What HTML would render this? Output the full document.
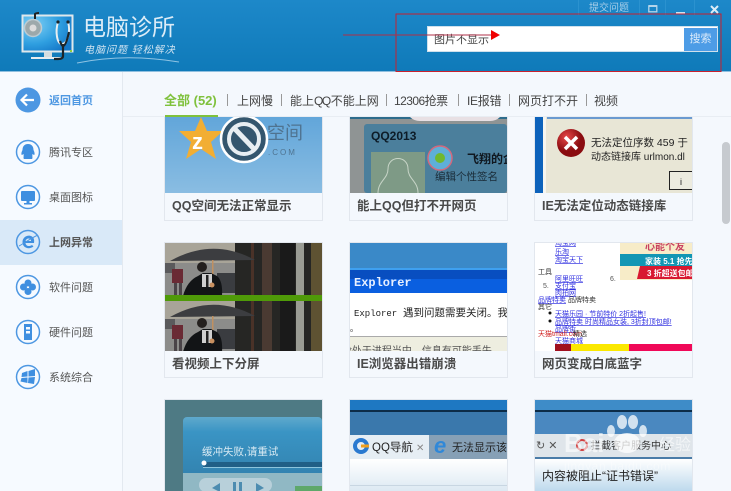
<!DOCTYPE html>
<html lang="zh"><head><meta charset="utf-8"><style>
html,body{margin:0;padding:0}
body{width:731px;height:491px;overflow:hidden;position:relative;background:#f4f8fd;font-family:"Liberation Sans","Noto Sans CJK SC",sans-serif;color:#444}
#all{position:absolute;left:0;top:0;width:731px;height:491px;overflow:hidden;filter:blur(.3px)}
.a{position:absolute;white-space:nowrap}
#hd{left:0;top:0;width:731px;height:71px;background:linear-gradient(#1d88c9,#0f7ab9);border-bottom:1px solid #8fbfdf;box-sizing:content-box}
#sb{left:0;top:72px;width:122px;height:419px;background:#f6faff;border-right:1px solid #e3e9f0}
.nav{left:49px;font-size:11px;line-height:16px;color:#555}
.tab{top:93px;font-size:12px;line-height:16px;color:#444}
.sep{top:94px;width:1px;height:12px;background:#999}
.card{position:absolute;width:157px;background:#f4f8fd;border:1px solid #e2e7ee;border-top:0;height:103px;overflow:hidden}
.card svg{position:absolute;left:0;top:0;display:block;filter:blur(.3px)}
.card b{position:absolute;left:7px;font-size:12.5px;line-height:16px;color:#4a4a4a;white-space:nowrap}
</style></head><body><div id="all">
<div class="a" id="hd"></div>
<svg class="a" style="left:20px;top:10px" width="60" height="52" viewBox="0 0 60 52">
<defs><radialGradient id="sc" cx=".2" cy=".25" r=".9"><stop offset="0" stop-color="#7fd0f5"/><stop offset=".6" stop-color="#2f9fe0"/><stop offset="1" stop-color="#1478c8"/></radialGradient></defs>
<rect x="2.500" y="5.500" width="50" height="36" fill="url(#sc)" stroke="#dfe8ec" stroke-width="2"/>
<rect x="24" y="42" width="8" height="5" fill="#d5dde0"/><rect x="11" y="47" width="32" height="2" fill="#e6ecef"/>
<circle cx="13" cy="18" r="8.500" stroke="#c2cdd2" stroke-width="1.500" fill="#a0a8a8" opacity=".95"/>
<circle cx="13" cy="18" r="3.500" fill="#dcdcdc"/>
<path d="M15 9V4Q16 3 19 3" stroke="#222" stroke-width="2" fill="none"/>
<path d="M38 12C35 22 37 34 42 34C47 34 51 22 48 12" stroke="#e8eef0" stroke-width="2" fill="none"/>
<path d="M40 31C41 34 42 36 43 36C45 36 47 31 49 22" stroke="#1c2428" stroke-width="2.200" fill="none"/>
<path d="M43 34V46Q43 49 38 49H34" stroke="#1c2428" stroke-width="2.200" fill="none"/>
<circle cx="38" cy="12" r="1.600" fill="#1c2428"/><circle cx="48" cy="12" r="1.600" fill="#1c2428"/>
<rect x="50" y="40" width="2" height="2" fill="#8fce3c"/>
</svg>
<div class="a" style="left:83px;top:13px;font-size:23px;line-height:28px;color:#dcecf7">电脑诊所</div>
<div class="a" style="left:84px;top:44px;font-size:10px;line-height:13px;color:#cfe3f1;font-style:italic;letter-spacing:1px">电脑问题 轻松解决</div>
<svg class="a" style="left:75px;top:55px" width="110" height="10"><path d="M2 8Q50 -2 104 7" stroke="#8fc4e4" fill="none"/></svg>

<div class="a" style="left:589px;top:2px;font-size:10px;line-height:13px;color:#a6cde8">提交问题</div>
<div class="a" style="left:578px;top:0;width:1px;height:15px;background:#2b92cf"></div>
<div class="a" style="left:639px;top:0;width:1px;height:15px;background:#2b92cf"></div>
<div class="a" style="left:665px;top:0;width:1px;height:15px;background:#2b92cf"></div>
<div class="a" style="left:694px;top:0;width:1px;height:15px;background:#2b92cf"></div>
<svg class="a" style="left:648px;top:4px" width="11" height="10"><rect x=".8" y="1.800" width="8" height="6" fill="none" stroke="#b5d5ea" stroke-width="1.300"/><rect x="1" y="1" width="8" height="2" fill="#b5d5ea"/></svg>
<div class="a" style="left:676px;top:12px;width:9px;height:2px;background:#cfe3f1"></div>
<svg class="a" style="left:709px;top:4px" width="11" height="11"><path d="M2 2L9 9M9 2L2 9" stroke="#dcecf7" stroke-width="2"/></svg>

<div class="a" style="left:427px;top:26px;width:291px;height:26px;background:#fff;box-sizing:border-box;border:1px solid #cfe0ec"></div>
<div class="a" style="left:434px;top:33px;font-size:11px;line-height:15px;color:#444">图片不显示</div>
<div class="a" style="left:684px;top:28px;width:33px;height:23px;background:#4d9ce6;color:#dbeafa;font-size:11px;line-height:23px;text-align:center">搜索</div>
<svg class="a" style="left:340px;top:10px" width="385" height="66">
<rect x="56" y="4" width="325" height="57.500" fill="none" stroke="#c8202e" stroke-width="1"/>
<path d="M3 25H152" stroke="#b03048" stroke-width="1"/><path d="M151 20L160 25L151 30Z" fill="#f00000"/></svg>

<div class="a" id="sb"></div>
<div class="a" style="left:0;top:220px;width:122px;height:45px;background:#d9e9f8"></div>
<svg class="a" style="left:14px;top:86px" width="30" height="305" viewBox="0 0 30 305">
<circle cx="14" cy="14" r="12.500" fill="#4d97e2"/><path d="M20 14H8M13 8.500L7.500 14L13 19.500" stroke="#fff" stroke-width="2.200" fill="none"/>
<g fill="none" stroke="#4d97e2" stroke-width="1.500"><circle cx="14" cy="66" r="11.500"/><circle cx="14" cy="111" r="11.500"/><circle cx="14" cy="156" r="11.500"/><circle cx="14" cy="201" r="11.500"/><circle cx="14" cy="246" r="11.500"/><circle cx="14" cy="291" r="11.500"/></g>
<g fill="#3f8fe0">
<path d="M14 58C10 58 8.500 61 8.500 64C7.500 66 7 68 7.800 69C8.500 69 9 68 9.500 68C10 71 9 72 10 73H18C19 72 18 71 18.500 68C19 68 19.500 69 20.200 69C21 68 20.500 66 19.500 64C19.500 61 18 58 14 58Z"/>
<rect x="7" y="105" width="14" height="10" rx="1"/><path d="M12.500 115H15.500V117H18V118.500H10V117H12.500Z"/>
<path d="M20 157H11.500C11.800 160 15 161 18 159L19.500 160.500C15 164 8.500 162 8.500 156C8.500 151 14 148 18 150.500C20 152 20.500 154 20 157ZM11.500 155H17C17 152 12.500 151.500 11.500 155Z"/>
<circle cx="14" cy="197" r="3.500"/><circle cx="14" cy="205.500" r="3.500"/><circle cx="9.500" cy="201" r="3.500"/><circle cx="18.500" cy="201" r="3.500"/>
<path d="M10 238H18V254H10Z"/>
<path d="M8 287L13.500 285V290.500L7.500 291ZM14.500 285L21 283V290L14.500 290.500ZM7.500 292L13.500 291.500V297L6.500 295.500ZM14.500 291.500L21 291L20 298L14 297Z"/>
</g>
<path d="M5 160C9 158 17 152 24 149" stroke="#4d97e2" fill="none"/>
<rect x="12" y="241" width="4" height="2.500" fill="#f6faff"/><rect x="12" y="245" width="4" height="2.500" fill="#f6faff"/>
</svg>
<div class="a nav" style="top:93px;color:#4d97e2;font-weight:bold">返回首页</div>
<div class="a nav" style="top:145px">腾讯专区</div>
<div class="a nav" style="top:190px">桌面图标</div>
<div class="a nav" style="top:235px;font-weight:bold">上网异常</div>
<div class="a nav" style="top:280px">软件问题</div>
<div class="a nav" style="top:325px">硬件问题</div>
<div class="a nav" style="top:370px">系统综合</div>

<div class="a tab" style="left:164px;color:#7fc13c;font-weight:bold;font-size:13px">全部 (52)</div>
<div class="a sep" style="left:227px"></div>
<div class="a tab" style="left:237px">上网慢</div>
<div class="a sep" style="left:281px"></div>
<div class="a tab" style="left:290px">能上<span style="letter-spacing:-1.500px">QQ</span>&#8202;不能上网</div>
<div class="a sep" style="left:386px"></div>
<div class="a tab" style="left:394px;letter-spacing:-.55px">12306抢票</div>
<div class="a sep" style="left:458px"></div>
<div class="a tab" style="left:467px;letter-spacing:-.3px">IE报错</div>
<div class="a sep" style="left:509px"></div>
<div class="a tab" style="left:518px">网页打不开</div>
<div class="a sep" style="left:586px"></div>
<div class="a tab" style="left:594px">视频</div>
<div class="a" style="left:123px;top:116px;width:608px;height:1px;background:#e8edf3"></div>
<div class="a" style="left:165px;top:115px;width:53px;height:2px;background:#7fc13c"></div>

<!-- row 1 -->
<div class="card" style="left:164px;top:117px">
<svg width="157" height="76"><defs><linearGradient id="q" x2="0" y2="1"><stop offset="0" stop-color="#62a6da"/><stop offset="1" stop-color="#8abde2"/></linearGradient></defs><rect width="157" height="76" fill="url(#q)"/>
<text x="102" y="22" font-size="18" fill="#4f7390">空间</text><text x="103" y="38" font-size="8" fill="#4f7390" letter-spacing="2">.COM</text>
<path d="M36 0L42 14L58 14L46 25L51 42L36 32L21 42L26 25L14 14L30 14Z" fill="#f2ae33"/><text x="27" y="32" font-size="22" font-weight="bold" fill="#fff">z</text>
<circle cx="79" cy="22" r="23" fill="#34566e" stroke="#fff" stroke-width="2.500"/><circle cx="79" cy="22" r="15" fill="none" stroke="#e8eef2" stroke-width="4"/><path d="M69 11L90 33" stroke="#e8eef2" stroke-width="5"/></svg>
<b style="top:81px">QQ空间无法正常显示</b></div>
<div class="card" style="left:349px;top:117px">
<svg width="157" height="76"><rect width="157" height="76" fill="#8f9494"/><rect width="157" height="2" fill="#2d6c8c"/><path d="M60 0Q64 4 70 4H140Q146 4 150 0Z" fill="#e8e0e4"/><rect x="14" y="7" width="143" height="69" rx="3" fill="#4b7f9c"/><text x="21" y="23" font-size="12" font-weight="bold" fill="#0d1c28">QQ2013</text>
<rect x="21" y="35" width="54" height="41" fill="#7e9a86"/><path d="M28 76C28 64 38 62 38 52C38 38 58 38 58 52C58 62 68 64 68 76" fill="none" stroke="#c8d5c8"/>
<circle cx="90" cy="41" r="12" fill="#5eafd8" stroke="#d2697e" stroke-width="1.500"/><circle cx="90" cy="41" r="5" fill="#70b82e"/>
<text x="117" y="46" font-size="12" font-weight="bold" fill="#101820">飞翔的企</text><text x="85" y="63" font-size="10.500" fill="#1a2c38">编辑个性签名</text></svg>
<b style="top:81px">能上QQ但打不开网页</b></div>
<div class="card" style="left:534px;top:117px">
<svg width="157" height="76"><rect width="157" height="76" fill="#e8e6d6"/><rect width="8" height="76" fill="#0c62bb"/><rect x="8" width="3" height="76" fill="#f5f5f0"/><rect x="12" width="145" height="2" fill="#6a9ad0"/>
<defs><radialGradient id="r" cx=".35" cy=".3"><stop offset="0" stop-color="#e84848"/><stop offset="1" stop-color="#8a0c10"/></radialGradient></defs><circle cx="36" cy="26" r="14" fill="url(#r)"/><path d="M30 20L42 32M42 20L30 32" stroke="#fff" stroke-width="3.500"/>
<text x="56" y="29" font-size="10.500" fill="#222">无法定位序数 459 于</text><text x="56" y="43" font-size="10" fill="#222">动态链接库 urlmon.dl</text><rect x="134.500" y="54.500" width="30" height="18" fill="#ecebdf" stroke="#222"/><text x="145" y="68" font-size="9" fill="#222">i</text></svg>
<b style="top:81px">IE无法定位动态链接库</b></div>

<!-- row 2 -->
<div class="card" style="left:164px;top:242px;height:134px;border-top:1px solid #e2e7ee">
<svg width="157" height="108"><rect width="157" height="108" fill="#5e5d58"/>
<g id="u"><rect y="0" width="70" height="53" fill="#8c8c8a"/><rect y="0" width="70" height="20" fill="#a8a498"/><rect y="20" width="10" height="10" fill="#5a5a5c"/><rect x="52" y="30" width="18" height="20" fill="#3a3c40"/><rect x="70" width="87" height="53" fill="#262624"/><rect x="86" width="3" height="53" fill="#4a3228"/><rect x="97" width="10" height="53" fill="#4a3a32"/><rect x="115" width="15" height="53" fill="#1a1a1a"/><rect x="131" width="8" height="53" fill="#9a9c94"/><rect x="146" width="11" height="53" fill="#5e5232"/>
<path d="M5 18Q48 -6 90 17Z" fill="#3c3d40"/><rect x="47" y="17" width="1.500" height="24" fill="#c09060"/><path d="M18 53Q22 38 33 33L38 30H46L52 33Q58 38 57 53Z" fill="#121416"/><circle cx="37" cy="24" r="5" fill="#24201e"/><rect x="37" y="31" width="10" height="13" fill="#cfcfcf"/><rect x="41" y="32" width="2.500" height="12" fill="#222"/><circle cx="47" cy="42" r="2.500" fill="#c89060"/><rect x="7" y="26" width="11" height="14" fill="#6a2a34"/><rect x="9" y="40" width="3" height="13" fill="#4a4448"/><rect x="14" y="40" width="3" height="13" fill="#4a4448"/></g>
<use href="#u" y="56"/><rect y="52" width="157" height="6" fill="#4f9a08"/></svg>
<b style="top:113px">看视频上下分屏</b></div>
<div class="card" style="left:349px;top:242px;height:134px;border-top:1px solid #e2e7ee">
<svg width="157" height="108"><rect width="157" height="26" fill="#3a89c8"/><rect y="25" width="157" height="25" fill="#0a5fe0"/><rect y="25" width="157" height="2" fill="#3ea0f0"/><rect y="27" width="157" height="9" fill="#084ec0"/><text x="4" y="43" font-family="Liberation Mono" font-size="12" font-weight="bold" fill="#e8f0ff">Explorer</text>
<rect y="50" width="157" height="43" fill="#fff"/><text x="4" y="73" font-family="Liberation Mono" font-size="9" fill="#222">Explorer</text><text x="53" y="73" font-size="10.500" fill="#222">遇到问题需要关闭。我</text><text x="0" y="88" font-size="8" fill="#222">。</text>
<rect y="93" width="157" height="15" fill="#eeeee0"/><rect y="93" width="157" height="1" fill="#aaa"/><text x="-2" y="111" font-size="10" fill="#555">*处于进程当中，信息有可能丢失</text></svg>
<b style="top:113px">IE浏览器出错崩溃</b></div>
<div class="card" style="left:534px;top:242px;height:134px;border-top:1px solid #e2e7ee">
<svg width="157" height="108" font-size="7"><rect width="157" height="108" fill="#fff"/><rect x="85" width="72" height="37" fill="#f7ecc8"/><rect x="85" y="11" width="72" height="12" fill="#1296b4"/><text x="110" y="7" font-size="10" font-weight="bold" fill="#c84060">心能个友</text><text x="110" y="21" font-size="8" fill="#fff" font-weight="bold">家装 5.1 抢先</text><path d="M105 23H157V36H102Z" fill="#d81830"/><text x="112" y="33" font-size="8" fill="#fff" font-weight="bold">3 折超送包邮</text>
<g fill="#3030e0" text-decoration="underline"><text x="20" y="2">淘宝网</text><text x="20" y="11">乐淘</text><text x="20" y="19">淘宝天下</text><text x="20" y="38">阿里旺旺</text><text x="20" y="45">支付宝</text><text x="20" y="52">肉拍网</text><text x="3" y="59">品牌特卖</text><text x="20" y="73">天猫乐园 · 节前特价 2折起售!</text><text x="20" y="81">品牌特卖 时尚精品女装, 3折封顶包邮!</text><text x="20" y="88">品牌街</text><text x="20" y="100">天猫商城</text></g>
<text x="3" y="31" fill="#333">工具</text><text x="33" y="59" fill="#333">品牌特卖</text><text x="3" y="66" fill="#333">其它</text><text x="75" y="38" fill="#555">6.</text><text x="8" y="45" fill="#555">5.</text><circle cx="15" cy="70" r="1.500" fill="#111"/><circle cx="15" cy="78" r="1.500" fill="#111"/><text x="3" y="93" fill="#d02020">天猫tmall.com</text><text x="38" y="93" fill="#333">精选</text>
<rect x="20" y="101" width="16" height="7" fill="#a01020"/><rect x="36" y="101" width="58" height="7" fill="#fbe800"/><rect x="94" y="101" width="63" height="7" fill="#f00858"/></svg>
<b style="top:113px">网页变成白底蓝字</b></div>

<!-- row 3 -->
<div class="card" style="left:164px;top:399px;height:92px;border:0;border-left:1px solid #e2e7ee;border-right:1px solid #e2e7ee;border-top:1px solid #e2e7ee">
<svg width="157" height="92"><defs><linearGradient id="p" x2="0" y2="1"><stop offset="0" stop-color="#5fa9cc"/><stop offset=".2" stop-color="#3a94c4"/><stop offset="1" stop-color="#2f7ca8"/></linearGradient></defs><rect width="157" height="92" fill="#4e7a84"/><rect x="18" y="17" width="139" height="75" rx="4" fill="url(#p)"/><rect x="18" y="73" width="139" height="19" fill="#90b8c4"/><text x="37" y="55" font-size="10.500" fill="#d4e8f2">缓冲失败,请重试</text><rect x="38" y="62" width="119" height="5" fill="#205f86"/><rect x="38" y="67" width="119" height="1" fill="#8cc4dc"/><circle cx="39" cy="63" r="2.500" fill="#fff"/><rect x="34" y="78" width="73" height="14" rx="7" fill="#b8d0da"/><path d="M44 83V92M55 83L47 88L55 92Z" fill="#4d8cb0"/><rect x="68" y="82" width="3" height="10" fill="#4d8cb0"/><rect x="74" y="82" width="3" height="10" fill="#4d8cb0"/><path d="M91 83L99 88L91 92ZM100 83V92" fill="#4d8cb0"/><rect x="130" y="86" width="27" height="6" fill="#5ea86a"/></svg></div>
<div class="card" style="left:349px;top:399px;height:92px;border:0;border-left:1px solid #e2e7ee;border-right:1px solid #e2e7ee;border-top:1px solid #e2e7ee">
<svg width="157" height="92"><defs><linearGradient id="g2" x2="0" y2="1"><stop offset="0" stop-color="#fff"/><stop offset="1" stop-color="#dbe8f2"/></linearGradient></defs><rect width="157" height="10" fill="#1e78c2"/><rect y="10" width="157" height="2" fill="#0c2c48"/><rect y="12" width="157" height="23" fill="#3a78ac"/><rect y="35" width="79" height="24" fill="#e6eef4"/><rect x="79" y="35" width="78" height="24" fill="#86a0b6"/><rect y="59" width="157" height="33" fill="url(#g2)"/><rect y="85" width="157" height="1" fill="#c8d6e2"/>
<circle cx="11" cy="46" r="6" fill="none" stroke="#2a7ad0" stroke-width="4"/><path d="M11 46L19 46" stroke="#f0a020" stroke-width="3"/><text x="22" y="51" font-size="11.500" fill="#222">QQ导航</text><text x="66" y="51" font-size="10" fill="#888">✕</text><text x="84" y="53" font-size="22" font-style="italic" fill="#3088d8" font-weight="bold">e</text><text x="102" y="51" font-size="11" fill="#222">无法显示该</text></svg></div>
<div class="card" style="left:534px;top:399px;height:92px;border:0;border-left:1px solid #e2e7ee;border-right:1px solid #e2e7ee;border-top:1px solid #e2e7ee">
<svg width="157" height="92"><defs><linearGradient id="w" x2="0" y2="1"><stop offset="0" stop-color="#fff"/><stop offset="1" stop-color="#bcd8ec"/></linearGradient></defs><rect width="157" height="10" fill="#3e8cc8"/><rect y="10" width="157" height="2" fill="#0c2c48"/><rect y="12" width="157" height="23" fill="#4a88c0"/><rect y="34" width="157" height="24" fill="#dfe5ea"/><rect y="57" width="157" height="2" fill="#4a7ca8"/><rect y="59" width="157" height="33" fill="url(#w)"/>
<text x="1" y="49" font-size="11" fill="#555">↻ ✕</text><circle cx="47" cy="45" r="5" fill="none" stroke="#d04040" stroke-width="2"/><text x="56" y="49" font-size="10" fill="#333">拦截客户服务中心</text><text x="7" y="80" font-size="12" fill="#222">内容被阻止“证书错误”</text>
<g fill="#fff" fill-opacity=".75"><ellipse cx="87" cy="22" rx="5" ry="7"/><ellipse cx="98" cy="22" rx="5" ry="7"/><ellipse cx="76" cy="31" rx="4" ry="6"/><ellipse cx="108" cy="31" rx="4" ry="6"/><ellipse cx="92" cy="43" rx="13" ry="10"/><text x="29" y="52" font-size="26" font-weight="bold" fill-opacity=".6">Bai</text><text x="124" y="50" font-size="16" fill-opacity=".6">经验</text><text x="29" y="70" font-size="12" fill-opacity=".4" letter-spacing=".6">jingyan.baidu.com</text></g></svg></div>

<div class="a" style="left:722px;top:142px;width:8px;height:82px;border-radius:4px;background:#c6cacf"></div>
</div></body></html>
